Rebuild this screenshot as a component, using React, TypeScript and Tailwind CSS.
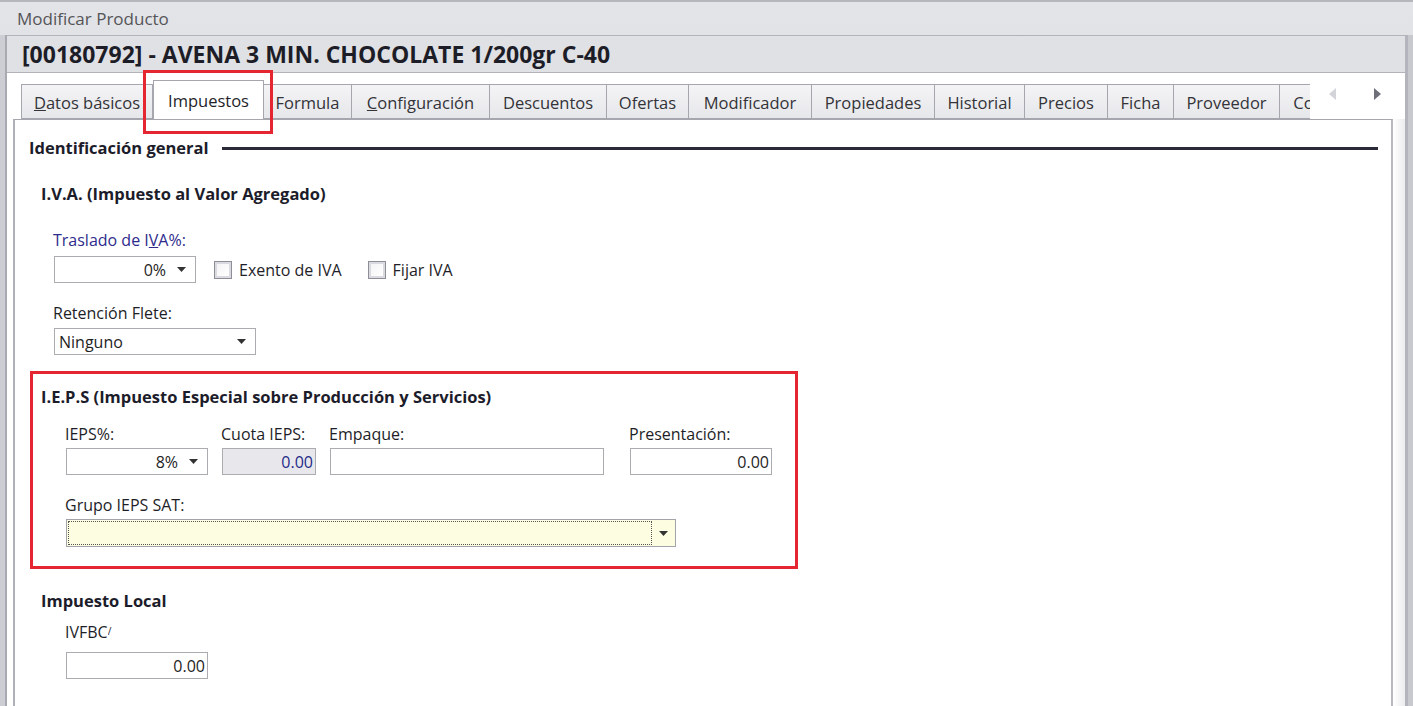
import React from "react";

const Arrow = () => (
  <svg width="9" height="5" viewBox="0 0 9 5" className="shrink-0">
    <path d="M0 0 H9 L4.5 5 Z" fill="#333" />
  </svg>
);

const Combo = ({ w, value, align = "right" }: { w: string; value: string; align?: "left" | "right" }) => (
  <div className={`${w} h-[27px] border border-[#ababb0] bg-white flex items-center pr-[9px]`}>
    <div className={`flex-1 text-[16px] text-[#1e1e1e] ${align === "right" ? "text-right pr-[11px]" : "text-left pl-[4px]"}`}>{value}</div>
    <Arrow />
  </div>
);

const Input = ({ w, value, disabled }: { w: string; value?: string; disabled?: boolean }) => (
  <div
    className={`${w} h-[27px] border border-[#ababb0] flex items-center justify-end pr-[2px] text-[16px] ${
      disabled ? "bg-[#e8e8ec] text-[#1f2a8a]" : "bg-white text-[#1e1e1e]"
    }`}
  >
    {value}
  </div>
);

const Check = ({ label }: { label: string }) => (
  <div className="flex items-center gap-[7px]">
    <div className="w-[18px] h-[18px] border border-[#8e8f96] bg-[#dadbe0] p-[2px]">
      <div className="w-full h-full bg-gradient-to-br from-[#f4f4f6] to-white" />
    </div>
    <span className="text-[16px] text-[#1e1e28]">{label}</span>
  </div>
);

const tabs: { label: React.ReactNode; w: string }[] = [
  { label: (<><span className="underline">D</span>atos básicos</>), w: "w-[132px]" },
  { label: "Impuestos", w: "w-[111px]" },
  { label: "Formula", w: "w-[89px]" },
  { label: (<><span className="underline">C</span>onfiguración</>), w: "w-[139px]" },
  { label: "Descuentos", w: "w-[118px]" },
  { label: "Ofertas", w: "w-[83px]" },
  { label: "Modificador", w: "w-[124px]" },
  { label: "Propiedades", w: "w-[124px]" },
  { label: "Historial", w: "w-[91px]" },
  { label: "Precios", w: "w-[84px]" },
  { label: "Ficha", w: "w-[67px]" },
  { label: "Proveedor", w: "w-[107px]" },
  { label: "Compras", w: "w-[98px]" },
];

export default function App() {
  return (
    <div className="w-[1413px] h-[706px] overflow-hidden bg-gradient-to-b from-[#e3e4e8] to-[#cacbd0] font-['Open_Sans',sans-serif] border-t-2 border-[#b5b6bc] relative">
      {/* title bar */}
      <div className="h-[33px] flex items-center pl-[17px] text-[17px] text-[#555558]">Modificar Producto</div>
      <div className="flex h-[673px]">
        <div className="w-[5px] bg-[#cdced3]" />
        <div className="w-[2px] bg-[#a9aab1]" />
        <div className="flex-1 flex flex-col">
          {/* header */}
          <div className="h-[38px] bg-[#e0e1e5] border-t border-b border-[#b3b4bb] flex items-center pl-[15px]">
            <span className="text-[23px] font-bold text-[#1d1d28]">[00180792] - AVENA 3 MIN. CHOCOLATE 1/200gr C-40</span>
          </div>
          {/* body */}
          <div className="flex-1 bg-white flex">
            <div className="w-[6px]" />
            <div className="flex-1 flex flex-col">
              {/* tab strip */}
              <div className="h-[46px] flex items-end relative">
                <div className="w-[1297px] pl-[8px] flex items-end overflow-hidden shrink-0">
                  {tabs.map((t, i) =>
                    i === 1 ? (
                      <div
                        key={i}
                        className={`${t.w} shrink-0 h-[40px] -mb-[1px] bg-white border border-b-0 border-[#a6a7ae] flex items-center justify-center text-[16.5px] text-[#1e1e28] z-10 pt-[2px]`}
                      >
                        {t.label}
                      </div>
                    ) : (
                      <div
                        key={i}
                        className={`${t.w} shrink-0 h-[35px] -ml-px first:ml-0 bg-gradient-to-b from-[#f4f4f6] to-[#e6e7ea] border border-[#a6a7ae] flex items-center justify-center text-[16.5px] text-[#333338] whitespace-nowrap pt-[3px]`}
                      >
                        {t.label}
                      </div>
                    )
                  )}
                </div>
                <div className="flex items-center self-start mt-[15px] ml-[19px] gap-[38px]">
                  <svg width="7" height="12" viewBox="0 0 7 12"><path d="M7 0 V12 L0 6 Z" fill="#d3d4d9" /></svg>
                  <svg width="7" height="12" viewBox="0 0 7 12"><path d="M0 0 V12 L7 6 Z" fill="#6e6f78" /></svg>
                </div>
              </div>
              {/* content panel */}
              <div className="flex-1 flex">
                <div className="w-[1380px] border-l-2 border-t border-r-2 border-[#a6a7ae] border-l-[#b0b1b8] border-r-[#b8b9c0] flex flex-col pl-[14px]">
                  <div className="mt-[18px] h-[20px] flex items-center pr-[13px]">
                    <span className="text-[16.5px] font-bold text-[#1c1c2a] whitespace-nowrap">Identificación general</span>
                    <div className="flex-1 h-[3px] bg-[#2a2a3a] ml-[13px]" />
                  </div>
                  <div className="mt-[26px] h-[20px] flex items-center pl-[12px] text-[16.5px] font-bold text-[#1c1c2a]">I.V.A. (Impuesto al Valor Agregado)</div>
                  <div className="mt-[27px] h-[18px] flex items-center pl-[24px] text-[16px] text-[#2e2b8c]">
                    Traslado de I<span className="underline">V</span>A%:
                  </div>
                  <div className="mt-[7px] flex items-center pl-[25px] gap-[18px]">
                    <Combo w="w-[142px]" value="0%" />
                    <Check label="Exento de IVA" />
                    <div className="ml-[8px]"><Check label="Fijar IVA" /></div>
                  </div>
                  <div className="mt-[21px] h-[18px] flex items-center pl-[24px] text-[16px] text-[#1e1e28]">Retención Flete:</div>
                  <div className="mt-[6px] pl-[25px]">
                    <Combo w="w-[202px]" value="Ninguno" align="left" />
                  </div>
                  {/* IEPS red box */}
                  <div className="mt-[16px] ml-[1px] w-[768px] h-[198px] border-[3px] border-[#e52630] flex flex-col">
                    <div className="mt-[13px] h-[20px] flex items-center pl-[8px] text-[16.5px] font-bold text-[#1c1c2a] whitespace-nowrap">
                      I.E.P.S (Impuesto Especial sobre Producción y Servicios)
                    </div>
                    <div className="mt-[18px] flex pl-[32px]">
                      <div className="flex flex-col w-[156px]">
                        <div className="h-[18px] flex items-center text-[16px] text-[#1e1e28]">IEPS%:</div>
                        <div className="mt-[5px] ml-[1px]"><Combo w="w-[142px]" value="8%" /></div>
                      </div>
                      <div className="flex flex-col w-[108px]">
                        <div className="h-[18px] flex items-center text-[16px] text-[#1e1e28] whitespace-nowrap">Cuota IEPS:</div>
                        <div className="mt-[5px] ml-[1px]"><Input w="w-[94px]" value="0.00" disabled /></div>
                      </div>
                      <div className="flex flex-col w-[300px]">
                        <div className="h-[18px] flex items-center text-[16px] text-[#1e1e28]">Empaque:</div>
                        <div className="mt-[5px] ml-[1px]"><Input w="w-[274px]" /></div>
                      </div>
                      <div className="flex flex-col w-[144px]">
                        <div className="h-[18px] flex items-center text-[16px] text-[#1e1e28]">Presentación:</div>
                        <div className="mt-[5px] ml-[1px]"><Input w="w-[142px]" value="0.00" /></div>
                      </div>
                    </div>
                    <div className="mt-[21px] h-[18px] flex items-center pl-[32px] text-[16px] text-[#1e1e28]">Grupo IEPS SAT:</div>
                    <div className="mt-[5px] ml-[33px] w-[610px] h-[28px] border border-[#a3a4aa] bg-[#fdfde2] flex items-center p-[1px]">
                      <div className="flex-1 h-full border border-dotted border-[#555]" />
                      <div className="w-[22px] flex justify-center"><Arrow /></div>
                    </div>
                  </div>
                  <div className="mt-[22px] h-[20px] flex items-center pl-[12px] text-[16.5px] font-bold text-[#1c1c2a]">Impuesto Local</div>
                  <div className="mt-[12px] h-[18px] flex items-center pl-[36px] text-[16px] text-[#1e1e28]">
                    IVFBC<span className="inline-block w-[4px] overflow-hidden text-[10px] self-end mb-[2px]">/</span>
                  </div>
                  <div className="mt-[11px] pl-[37px]">
                    <Input w="w-[142px]" value="0.00" />
                  </div>
                </div>
                <div className="flex-1 bg-gradient-to-r from-white to-[#ececef]" />
              </div>
            </div>
          </div>
        </div>
        <div className="w-[3px] bg-[#b4b5bc]" />
        <div className="w-[5px] bg-[#c8c9cf]" />
      </div>
      {/* annotation: red box around active tab */}
      <div className="absolute left-[143px] top-[68px] w-[130px] h-[64px] border-[3px] border-[#e52630] pointer-events-none" />
    </div>
  );
}
